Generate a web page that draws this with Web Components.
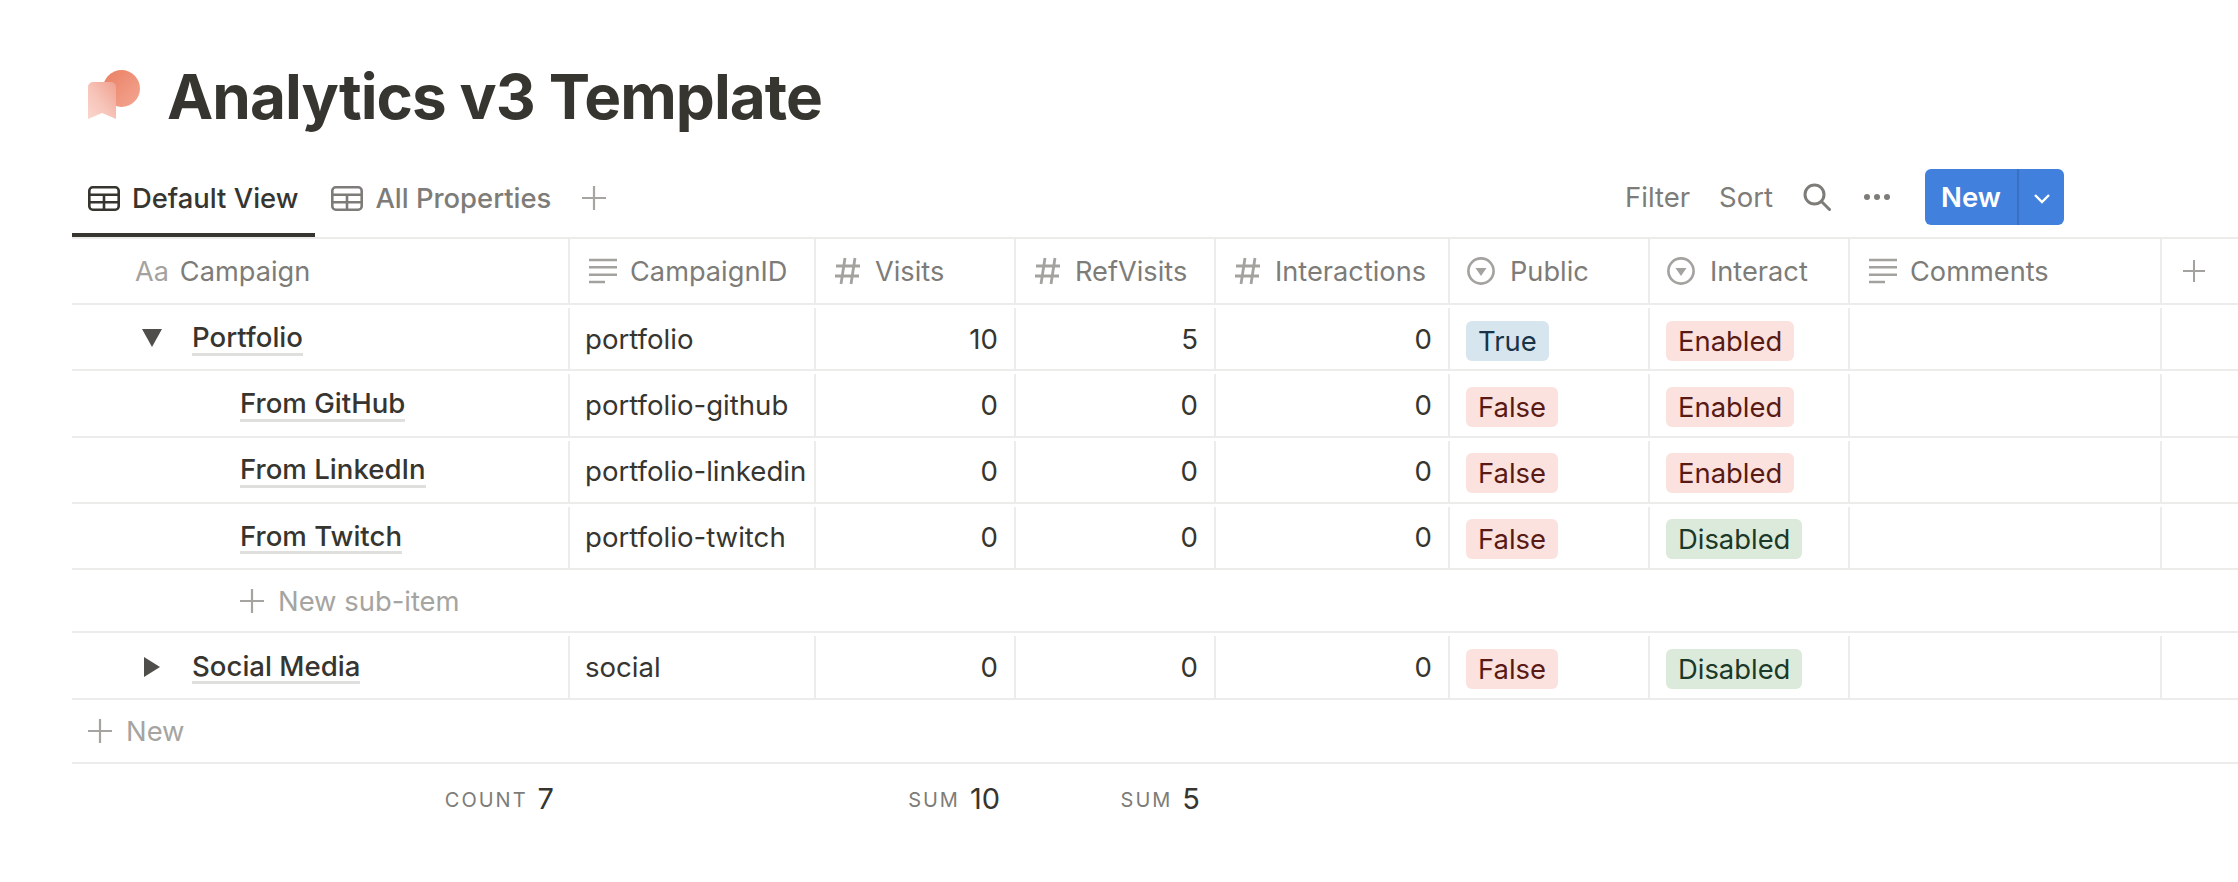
<!DOCTYPE html>
<html lang="en">
<head>
<meta charset="utf-8">
<title>Analytics v3 Template</title>
<style>
  html, body { margin: 0; background: #fff; }
  body { font-family: Inter, "Liberation Sans", sans-serif; color: #37352f; overflow: hidden; }
</style>
</head>
<body>
<notion-page>
  <page-title slot="title">Analytics v3 Template</page-title>
  <view-bar slot="bar">
    <view-tab active>Default View</view-tab>
    <view-tab>All Properties</view-tab>
  </view-bar>

  <db-row kind="head">
    <head-cell icon="aa">Campaign</head-cell>
    <head-cell icon="lines">CampaignID</head-cell>
    <head-cell icon="hash">Visits</head-cell>
    <head-cell icon="hash">RefVisits</head-cell>
    <head-cell icon="hash">Interactions</head-cell>
    <head-cell icon="select">Public</head-cell>
    <head-cell icon="select">Interact</head-cell>
    <head-cell icon="lines">Comments</head-cell>
    <head-cell icon="plus" last></head-cell>
  </db-row>

  <db-row>
    <title-cell toggle="open">Portfolio</title-cell>
    <db-cell>portfolio</db-cell>
    <db-cell num>10</db-cell><db-cell num>5</db-cell><db-cell num>0</db-cell>
    <db-cell><select-tag color="blue">True</select-tag></db-cell>
    <db-cell><select-tag color="red">Enabled</select-tag></db-cell>
    <db-cell></db-cell><db-cell last></db-cell>
  </db-row>
  <db-row>
    <title-cell child>From GitHub</title-cell>
    <db-cell>portfolio-github</db-cell>
    <db-cell num>0</db-cell><db-cell num>0</db-cell><db-cell num>0</db-cell>
    <db-cell><select-tag color="red">False</select-tag></db-cell>
    <db-cell><select-tag color="red">Enabled</select-tag></db-cell>
    <db-cell></db-cell><db-cell last></db-cell>
  </db-row>
  <db-row>
    <title-cell child>From LinkedIn</title-cell>
    <db-cell>portfolio-linkedin</db-cell>
    <db-cell num>0</db-cell><db-cell num>0</db-cell><db-cell num>0</db-cell>
    <db-cell><select-tag color="red">False</select-tag></db-cell>
    <db-cell><select-tag color="red">Enabled</select-tag></db-cell>
    <db-cell></db-cell><db-cell last></db-cell>
  </db-row>
  <db-row>
    <title-cell child>From Twitch</title-cell>
    <db-cell>portfolio-twitch</db-cell>
    <db-cell num>0</db-cell><db-cell num>0</db-cell><db-cell num>0</db-cell>
    <db-cell><select-tag color="red">False</select-tag></db-cell>
    <db-cell><select-tag color="green">Disabled</select-tag></db-cell>
    <db-cell></db-cell><db-cell last></db-cell>
  </db-row>

  <add-row indent="168" height="61">New sub-item</add-row>

  <db-row style="height: 65px">
    <title-cell toggle="closed">Social Media</title-cell>
    <db-cell>social</db-cell>
    <db-cell num>0</db-cell><db-cell num>0</db-cell><db-cell num>0</db-cell>
    <db-cell><select-tag color="red">False</select-tag></db-cell>
    <db-cell><select-tag color="green">Disabled</select-tag></db-cell>
    <db-cell></db-cell><db-cell last></db-cell>
  </db-row>

  <add-row indent="16" height="62">New</add-row>

  <db-row kind="foot">
    <calc-cell label="COUNT">7</calc-cell>
    <calc-cell></calc-cell>
    <calc-cell label="SUM">10</calc-cell>
    <calc-cell label="SUM">5</calc-cell>
  </db-row>
</notion-page>

<script>
  const ICONS = {
    table: `<svg width="32" height="25" viewBox="0 0 32 25" fill="none" stroke="currentColor" stroke-width="2.6"><rect x="1.3" y="1.3" width="29.4" height="22.4" rx="3.5"/><path d="M1 8.800h30M1 16.200h30M16 8.800v15"/></svg>`,
    plus: `<svg width="24" height="24" viewBox="0 0 24 24" fill="none" stroke="currentColor" stroke-width="2.200"><path d="M12 0v24M0 12h24"/></svg>`,
    lines: `<svg width="28" height="26" viewBox="0 0 28 26" fill="none" stroke="currentColor" stroke-width="2.400"><path d="M0 2h28M0 9.300h28M0 16.700h28M0 24h16"/></svg>`,
    hash: `<svg width="26" height="28" viewBox="0 0 26 28" fill="none" stroke="currentColor" stroke-width="2.800"><path d="M10 1 6 27M20 1l-4 26M1 9h24M0 19h24"/></svg>`,
    select: `<svg width="28" height="28" viewBox="0 0 28 28"><circle cx="14" cy="14" r="12.600" fill="none" stroke="currentColor" stroke-width="2.600"/><path d="M8.500 11h11L14 19z" fill="currentColor"/></svg>`,
    search: `<svg width="28" height="28" viewBox="0 0 28 28" fill="none" stroke="currentColor" stroke-width="3"><circle cx="11.500" cy="11.500" r="9.500"/><path d="m18.500 18.500 8 8" stroke-linecap="round"/></svg>`,
    dots: `<svg width="26" height="6" viewBox="0 0 26 6" fill="currentColor"><circle cx="3" cy="3" r="3"/><circle cx="13" cy="3" r="3"/><circle cx="23" cy="3" r="3"/></svg>`,
    chevron: `<svg width="16" height="10" viewBox="0 0 16 10" fill="none" stroke="currentColor" stroke-width="2.400"><path d="m1 1 7 7 7-7"/></svg>`,
    down: `<svg width="20" height="18" viewBox="0 0 20 18" fill="currentColor"><path d="M0 0h20L10 18z"/></svg>`,
    right: `<svg width="16" height="20" viewBox="0 0 16 20" fill="currentColor"><path d="M0 0l16 10L0 20z"/></svg>`,
    logo: `<svg width="52" height="50" viewBox="0 0 52 50">
      <defs>
        <linearGradient id="sun" x1="0" y1="0" x2="1" y2="1"><stop offset="0" stop-color="#e97f62"/><stop offset="1" stop-color="#f4a693"/></linearGradient>
        <linearGradient id="mark" x1="1" y1="0" x2="0" y2="1"><stop offset="0" stop-color="#f0a08e"/><stop offset=".55" stop-color="#f7c4b9"/><stop offset="1" stop-color="#fad6cd"/></linearGradient>
      </defs>
      <circle cx="33.500" cy="18.500" r="18.500" fill="url(#sun)"/>
      <path d="M5 12h18a5 5 0 0 1 5 5v32l-14-6-14 6V17a5 5 0 0 1 5-5z" fill="url(#mark)"/>
    </svg>`,
  };

  function defineEl(name, html) {
    customElements.define(name, class extends HTMLElement {
      constructor() {
        super();
        this.attachShadow({mode: 'open'});
      }
      connectedCallback() {
        this.shadowRoot.innerHTML = typeof html === 'function' ? html(this) : html;
      }
    });
  }

  defineEl('notion-page', `
    <style>
      :host { display: block; padding: 0 0 0 72px; width: 2166px; height: 882px; --cols: 498px 246px 200px 200px 234px 200px 200px 312px 76px; --line: #ececeb; }
    </style>
    <slot name="title"></slot>
    <slot name="bar"></slot>
    <slot></slot>
  `);

  defineEl('page-title', `
    <style>
      :host { display: flex; align-items: center; gap: 27px; height: 165px; padding: 0 0 0 16px; box-sizing: border-box; }
      h1 { margin: 0; font-size: 62px; line-height: 1.2; font-weight: 700; letter-spacing: -0.95px; color: #37352f; position: relative; top: 15px; }
      .logo { display: flex; position: relative; top: 12px; width: 52px; }
    </style>
    <span class="logo">${ICONS.logo}</span>
    <h1><slot></slot></h1>
  `);

  defineEl('view-bar', `
    <style>
      :host { display: flex; align-items: stretch; height: 72px; width: 1992px; }
      .add { color: #a6a5a1; display: flex; align-items: center; margin-left: 18px; padding-bottom: 6px; }
      .tools { margin-left: auto; display: flex; align-items: center; color: #7d7c78; font-size: 27.500px; padding-bottom: 8px; }
      .tools span, .tools svg { display: block; }
      .filter { margin-right: 29px; } .sort { margin-right: 30px; } .search { margin-right: 33px; } .dots { margin-right: 35px; }
      .new { display: flex; height: 56px; border-radius: 6px; background: #4180dc; color: #fff; font-weight: 600; overflow: hidden; }
      .new b { font-weight: 600; width: 92px; display: flex; justify-content: center; align-items: center; border-right: 2px solid #3a70c0; }
      .new i { width: 45px; display: flex; justify-content: center; align-items: center; padding-top: 3px; box-sizing: border-box; }
    </style>
    <slot></slot>
    <span class="add">${ICONS.plus}</span>
    <div class="tools">
      <span class="filter">Filter</span>
      <span class="sort">Sort</span>
      <span class="search">${ICONS.search}</span>
      <span class="dots">${ICONS.dots}</span>
      <div class="new"><b>New</b><i>${ICONS.chevron}</i></div>
    </div>
  `);

  defineEl('view-tab', `
    <style>
      :host { display: flex; align-items: center; gap: 12px; padding: 0 16px 6px; font-size: 27.400px; color: #7d7c78; font-weight: 500; box-sizing: border-box; margin-right: -3px; }
      :host([active]) { color: #37352f; border-bottom: 4px solid #37352f; padding: 4px 17px 6px 16px; margin-right: 0; }
      svg { display: block; }
    </style>
    ${ICONS.table}<span><slot></slot></span>
  `);

  defineEl('db-row', `
    <style>
      :host { display: grid; grid-template-columns: var(--cols); height: 64.250px; border-bottom: 2px solid var(--line); font-size: 27.600px; color: #37352f; }
      :host([kind="head"]) { border-top: 2px solid var(--line); height: 64px; color: #7d7c78; font-size: 27.200px; }
      :host([kind="foot"]) { border-bottom: 0; height: 68px; }
    </style>
    <slot></slot>
  `);

  defineEl('head-cell', (el) => {
    const name = el.getAttribute('icon');
    const icon = name === 'aa' ? '<span class="aa">Aa</span>' : ICONS[name];
    return `
    <style>
      :host { display: flex; align-items: center; padding-left: 19px; border-right: 2px solid var(--line); box-sizing: border-box; min-width: 0; white-space: nowrap; }
      :host([last]) { border-right: 0; padding-left: 21px; }
      :host([icon="aa"]) { padding-left: 63px; }
      :host([icon="select"]) .ico { margin-left: -2px; margin-right: 15px; }
      :host([icon="lines"]) .ico { margin-right: 13px; }
      :host([icon="plus"]) svg { width: 22px; height: 22px; }
      .ico { display: flex; color: #a3a29f; margin-right: 14px; }
      .aa { font-size: 27px; line-height: 1; margin-right: -3px; }
      svg { display: block; }
    </style>
    <span class="ico">${icon}</span><slot></slot>`;
  });

  defineEl('db-cell', `
    <style>
      :host { display: flex; align-items: center; padding: 0 16px 0 15px; margin-top: 3px; border-right: 2px solid var(--line); box-sizing: border-box; min-width: 0; white-space: nowrap; }
      :host([num]) { justify-content: flex-end; }
      :host([last]) { border-right: 0; }
    </style>
    <slot></slot>
  `);

  defineEl('title-cell', (el) => {
    const t = el.getAttribute('toggle');
    return `
    <style>
      :host { display: flex; align-items: center; margin-top: 3px; border-right: 2px solid var(--line); box-sizing: border-box; font-weight: 500; white-space: nowrap; padding-left: 70px; }
      :host([toggle]) { padding-top: 1px; }
      :host([toggle]) .arrow { display: flex; width: 50px; color: #4f4e4a; position: relative; top: -1px; }
      :host([toggle="closed"]) .arrow { padding-left: 2px; width: 48px; }
      :host([child]) { padding-left: 168px; }
      .arrow { display: none; }
      .name { border-bottom: 3px solid rgba(55,53,47,.16); line-height: 1.1; }
      svg { display: block; }
    </style>
    <span class="arrow">${t === 'open' ? ICONS.down : t === 'closed' ? ICONS.right : ''}</span>
    <span class="name"><slot></slot></span>`;
  });

  defineEl('select-tag', `
    <style>
      :host { display: inline-flex; align-items: center; height: 40px; padding: 0 12px; margin-left: 1px; border-radius: 6px; font-size: 27.400px; white-space: nowrap; position: relative; top: 2px; }
      :host([color="blue"]) { background: #d7e5ee; color: #183347; }
      :host([color="red"]) { background: #fbe2de; color: #5a1a14; }
      :host([color="green"]) { background: #dbeada; color: #1c3829; }
    </style>
    <slot></slot>
  `);

  defineEl('add-row', (el) => `
    <style>
      :host { display: flex; align-items: center; gap: 14px; height: ${el.getAttribute('height')}px; padding-left: ${el.getAttribute('indent')}px; border-bottom: 2px solid var(--line); color: #a5a4a0; font-size: 27.400px; }
      svg { display: block; }
    </style>
    ${ICONS.plus}<span><slot></slot></span>
  `);

  defineEl('calc-cell', (el) => {
    const label = el.getAttribute('label');
    return `
    <style>
      :host { display: flex; justify-content: flex-end; align-items: center; gap: 10px; padding-right: 16px; font-size: 29px; font-weight: 400; }
      .label { font-size: 20px; letter-spacing: 2px; color: #7d7c78; position: relative; top: 2px; }
    </style>
    ${label ? `<span class="label">${label}</span>` : ''}<span><slot></slot></span>`;
  });
</script>
</body>
</html>
